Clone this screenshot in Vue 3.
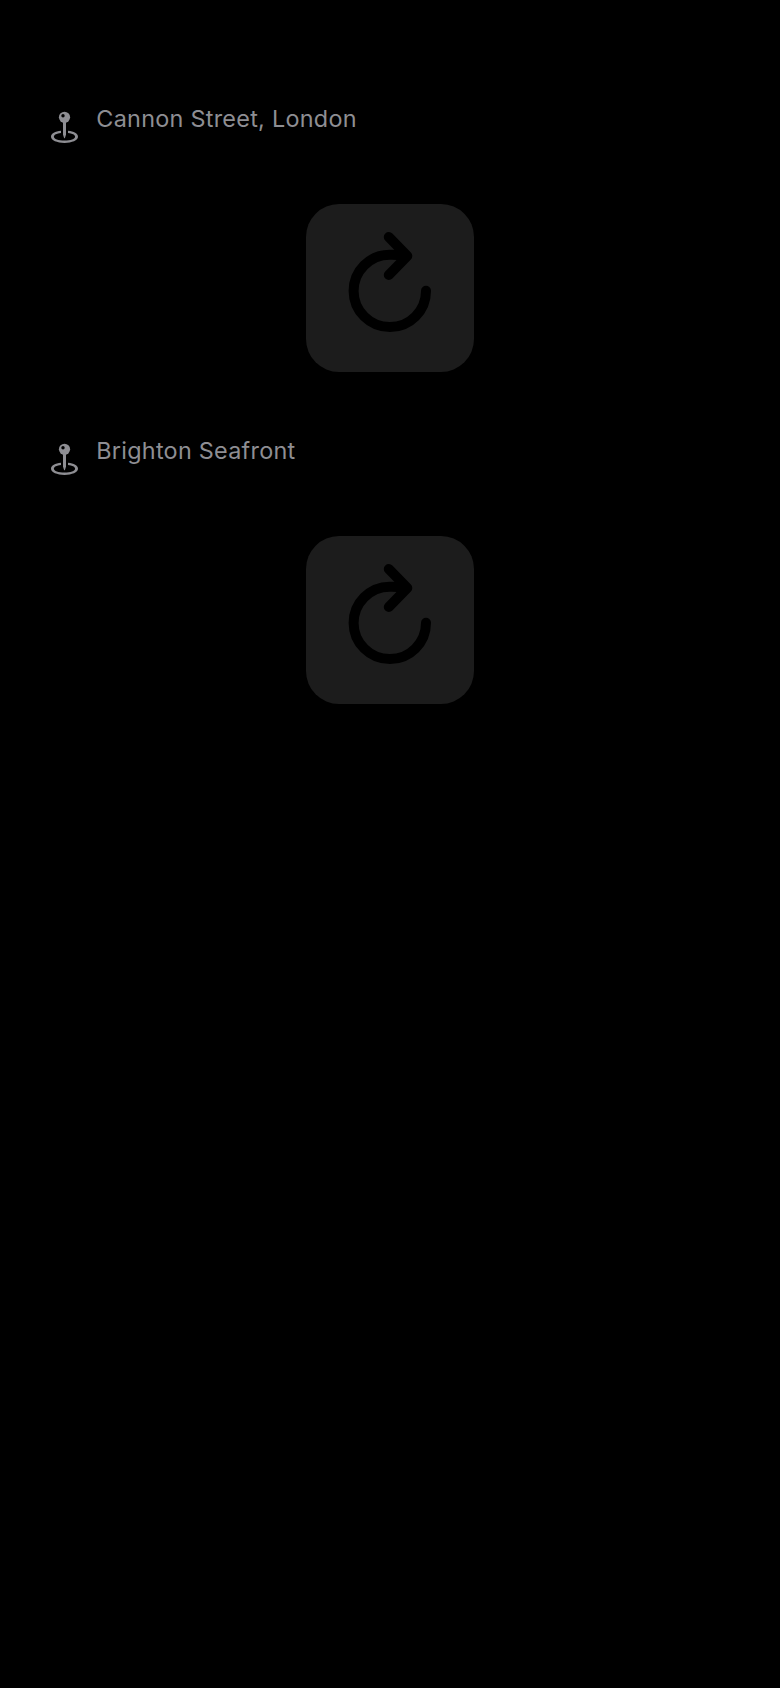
<script setup>
const locations = [
  { name: 'Cannon Street, London', spacing: '0.27px' },
  { name: 'Brighton Seafront', spacing: '0.26px' }
]
</script>

<template>
  <main class="screen">
    <section v-for="place in locations" :key="place.name" class="location">
      <header class="heading">
        <svg class="pin" viewBox="0 0 30 34" aria-hidden="true">
          <path class="solid" fill-rule="evenodd" d="M11 20.8C5.2 21.3 1 23.4 1 26.8C1 30.4 7 32.9 14.5 32.9S28 30.4 28 26.8C28 23.4 23.8 21.3 18 20.8V23C22.4 23.5 25.1 24.9 25.1 26.7C25.1 28.9 20.7 30.6 14.5 30.6S3.9 28.9 3.9 26.7C3.9 24.9 6.6 23.5 11 23Z" />
          <path class="solid" d="M13 11H16V24.5L15 27.8Q14.5 28.9 14 27.8L13 24.5Z" />
          <circle class="solid" cx="14.5" cy="7.3" r="5.6" />
          <circle class="shine" cx="13" cy="5.8" r="1.7" />
        </svg>
        <span class="name" :style="{ letterSpacing: place.spacing }">{{ place.name }}</span>
      </header>
      <button class="reload" type="button" :aria-label="`Reload ${place.name}`">
        <svg viewBox="0 0 168 168" aria-hidden="true">
          <path d="M120 86.8A36.2 36.2 0 1 1 83.7 50.7Q92 50.5 99.5 52" />
          <path d="M82.8 33.1L101.3 52.1L82.8 71" />
        </svg>
      </button>
    </section>
  </main>
</template>

<style>
body {
  background: #000;
}
</style>

<style scoped>
.screen {
  box-sizing: border-box;
  min-height: 1688px;
  padding: 100px 50px 0;
  background: #000;
}

.location {
  display: flex;
  flex-direction: column;
  height: 332px;
}

.heading {
  display: flex;
  align-items: flex-start;
  height: 104px;
  color: #8e8e93;
}

.pin {
  flex: none;
  width: 30px;
  height: 34px;
  margin-top: 10px;
}

.solid {
  fill: #8e8e93;
}

.shine {
  fill: #000;
}

.name {
  margin: 3px 0 0 16.3px;
  font: 400 23.4px/32px Inter, sans-serif;
  white-space: nowrap;
}

.reload {
  align-self: center;
  width: 168px;
  height: 168px;
  padding: 0;
  border: 0;
  border-radius: 33px;
  background: #1c1c1c;
}

.reload svg {
  display: block;
  width: 168px;
  height: 168px;
  fill: none;
  stroke: #000;
  stroke-width: 10;
  stroke-linecap: round;
  stroke-linejoin: round;
}
</style>
